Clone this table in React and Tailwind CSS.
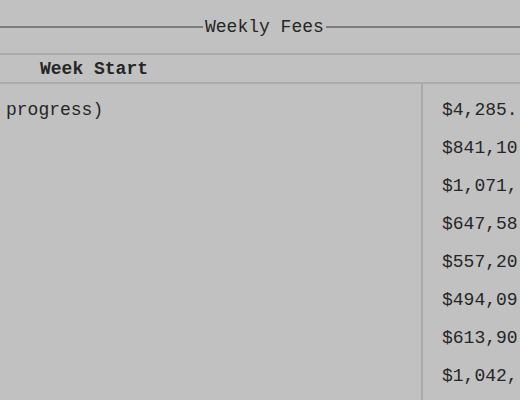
import React from "react";

const fees = [
  "$4,285.",
  "$841,10",
  "$1,071,",
  "$647,58",
  "$557,20",
  "$494,09",
  "$613,90",
  "$1,042,",
];

const App = () => {
  return (
    <div
      className="w-[520px] h-[400px] overflow-hidden bg-[#c1c1c1] text-[#262626] text-[18px] leading-none"
      style={{ fontFamily: '"Liberation Mono", "DejaVu Sans Mono", monospace' }}
    >
      {/* title rule */}
      <div className="h-[53px] grid grid-cols-[203px_auto_1fr] items-center">
        <div className="h-[2px] bg-[#7d7d7d]" />
        <span className="px-[2px]">Weekly Fees</span>
        <div className="h-[2px] bg-[#7d7d7d]" />
      </div>
      <div className="h-[2px] bg-[#ababab]" />

      {/* header */}
      <div className="h-[27px] flex items-center pl-[40px] font-bold">Week Start</div>
      <div className="h-[2px] bg-[#ababab]" />

      {/* rows */}
      <div className="flex">
        <div className="w-[421px] pt-[17px]">
          <div className="h-[38px] pl-[6px]">progress)</div>
        </div>
        <div className="w-[2px] h-[320px] bg-[#a9a9a9]" />
        <div className="flex-1 pl-[19px] pt-[17px]">
          {fees.map((fee) => (
            <div key={fee} className="h-[38px] whitespace-nowrap">
              {fee}
            </div>
          ))}
        </div>
      </div>
    </div>
  );
};

export default App;
